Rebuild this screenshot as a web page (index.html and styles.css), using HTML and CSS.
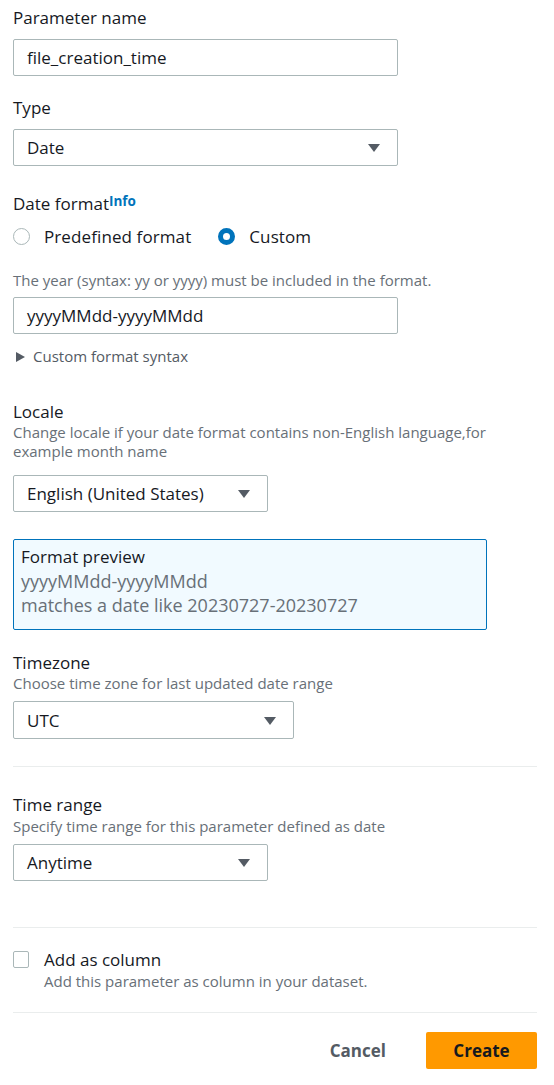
FILE: index.html
```html
<!DOCTYPE html>
<html lang="en">
<head>
<meta charset="utf-8">
<title>Create parameter</title>
<link rel="stylesheet" href="styles.css">
</head>
<body>
<div class="form">
  <div class="field">
    <div class="label">Parameter name</div>
    <div class="input input-full mt11">file_creation_time</div>
  </div>

  <div class="field mt22">
    <div class="label">Type</div>
    <div class="select input-full mt11"><span>Date</span><span class="caret"></span></div>
  </div>

  <div class="field mt28">
    <div class="label">Date format<sup class="info">Info</sup></div>
    <div class="radios">
      <label class="radio"><span class="dot"></span><span>Predefined format</span></label>
      <label class="radio"><span class="dot on"></span><span>Custom</span></label>
    </div>
    <div class="hint hint-year">The year (syntax: yy or yyyy) must be included in the format.</div>
    <div class="input input-full mt7">yyyyMMdd-yyyyMMdd</div>
    <div class="expander"><span class="tri"></span><span>Custom format syntax</span></div>
  </div>

  <div class="field mt36">
    <div class="label">Locale</div>
    <div class="hint mt1">Change locale if your date format contains non-English language,for example month name</div>
    <div class="select input-mid mt14"><span>English (United States)</span><span class="caret"></span></div>
  </div>

  <div class="preview">
    <div class="preview-title">Format preview</div>
    <div class="preview-text">yyyyMMdd-yyyyMMdd</div>
    <div class="preview-text">matches a date like 20230727-20230727</div>
  </div>

  <div class="field mt23">
    <div class="label">Timezone</div>
    <div class="hint mt1">Choose time zone for last updated date range</div>
    <div class="select input-wide tall mt8"><span>UTC</span><span class="caret"></span></div>
  </div>

  <div class="divider mt27"></div>

  <div class="field mt28">
    <div class="label">Time range</div>
    <div class="hint mt2">Specify time range for this parameter defined as date</div>
    <div class="select input-mid mt8"><span>Anytime</span><span class="caret"></span></div>
  </div>

  <div class="divider mt46"></div>

  <div class="check-row">
    <span class="box"></span>
    <div class="check-text">
      <div class="label">Add as column</div>
      <div class="hint mt2">Add this parameter as column in your dataset.</div>
    </div>
  </div>

  <div class="divider mt21"></div>

  <div class="actions">
    <button class="btn-link">Cancel</button>
    <button class="btn-primary">Create</button>
  </div>
</div>
</body>
</html>
```
FILE: styles.css
```css
* { box-sizing: border-box; }
html, body { margin: 0; padding: 0; background: #ffffff; }
body {
  font-family: "Open Sans", "Noto Sans", "Liberation Sans", sans-serif;
  color: #16191f;
}
.form {
  width: 554px;
  padding: 8px 17px 0 13px;
}
.label {
  font-size: 17px;
  line-height: 20px;
  color: #16191f;
}
.info {
  font-size: 13.5px;
  font-weight: 700;
  color: #0073bb;
  vertical-align: 0;
  position: relative;
  top: -4px;
  line-height: 0;
  margin-left: 0;
}
.hint {
  font-size: 15px;
  line-height: 19px;
  color: #687078;
}
.mt1 { margin-top: 1px; }
.mt2 { margin-top: 2px; }
.mt7 { margin-top: 7px; }
.mt8 { margin-top: 8px; }
.mt11 { margin-top: 11px; }
.mt14 { margin-top: 14px; }
.mt21 { margin-top: 21px; }
.mt22 { margin-top: 22px; }
.mt23 { margin-top: 23px; }
.mt27 { margin-top: 27px; }
.mt28 { margin-top: 28px; }
.mt36 { margin-top: 36px; }
.mt46 { margin-top: 46px; }

.input, .select {
  height: 37px;
  border: 1px solid #aab7b8;
  border-radius: 2px;
  padding: 0 17px 0 13px;
  font-size: 17px;
  color: #16191f;
  display: flex;
  align-items: center;
  background: #ffffff;
}
.select { justify-content: space-between; }
.select.tall { height: 38px; }
.input-full { width: 385px; }
.input-mid { width: 255px; }
.input-wide { width: 281px; }
.caret {
  width: 0;
  height: 0;
  border-left: 6.5px solid transparent;
  border-right: 6.5px solid transparent;
  border-top: 8.5px solid #545b64;
  margin-top: 1px;
}

.radios {
  display: flex;
  gap: 27px;
  margin-top: 12px;
  height: 20px;
  align-items: center;
}
.radio {
  display: flex;
  align-items: center;
  gap: 14px;
  font-size: 17px;
  letter-spacing: 0.1px;
  color: #16191f;
}
.dot {
  width: 17px;
  height: 17px;
  border-radius: 50%;
  border: 1.5px solid #aab7b8;
  background: #fff;
  flex: none;
}
.dot.on {
  border: 5px solid #0073bb;
}
.hint-year { margin-top: 25px; }

.expander {
  margin-top: 13px;
  display: flex;
  align-items: center;
  gap: 8px;
  font-size: 15px;
  line-height: 19px;
  color: #545b64;
  padding-left: 3px;
}
.tri {
  width: 0;
  height: 0;
  border-top: 5.5px solid transparent;
  border-bottom: 5.5px solid transparent;
  border-left: 9px solid #545b64;
}

.preview {
  margin-top: 27px;
  width: 474px;
  height: 91px;
  border: 1px solid #0073bb;
  border-radius: 2px;
  background: #f1faff;
  padding: 5px 7px 0 7px;
}
.preview-title {
  font-size: 17px;
  line-height: 24px;
  color: #16191f;
}
.preview-text {
  font-size: 18px;
  line-height: 24px;
  color: #687078;
}

.divider {
  height: 1px;
  background: #eaeded;
  width: 524px;
}

.check-row {
  display: flex;
  gap: 15px;
  margin-top: 22px;
}
.box {
  width: 16px;
  height: 17px;
  border: 1.5px solid #aab7b8;
  border-radius: 2px;
  margin-top: 1px;
  flex: none;
}

.actions {
  margin-top: 19px;
  display: flex;
  justify-content: flex-end;
  align-items: center;
  gap: 40px;
  width: 524px;
}
button {
  font-family: "Open Sans", "Noto Sans", "Liberation Sans", sans-serif;
  font-size: 17px;
  font-weight: 700;
  cursor: pointer;
}
.btn-link {
  border: none;
  background: none;
  color: #545b64;
  padding: 0;
  height: 37px;
}
.btn-primary {
  width: 111px;
  height: 37px;
  border: none;
  border-radius: 2px;
  background: #ff9900;
  color: #16191f;
}
```
